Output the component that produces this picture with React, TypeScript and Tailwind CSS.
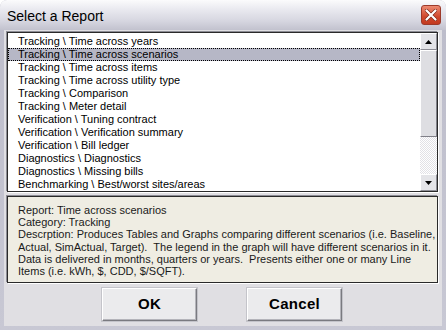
const reports = [
  "Tracking \\ Time across years",
  "Tracking \\ Time across scenarios",
  "Tracking \\ Time across items",
  "Tracking \\ Time across utility type",
  "Tracking \\ Comparison",
  "Tracking \\ Meter detail",
  "Verification \\ Tuning contract",
  "Verification \\ Verification summary",
  "Verification \\ Bill ledger",
  "Diagnostics \\ Diagnostics",
  "Diagnostics \\ Missing bills",
  "Benchmarking \\ Best/worst sites/areas",
];

const description = [
  "Report: Time across scenarios",
  "Category: Tracking",
  "Descrption: Produces Tables and Graphs comparing different scenarios (i.e. Baseline,",
  "Actual, SimActual, Target).  The legend in the graph will have different scenarios in it.",
  "Data is delivered in months, quarters or years.  Presents either one or many Line",
  "Items (i.e. kWh, $, CDD, $/SQFT).",
];

// petite flèche de la barre de défilement
function Arrow({ down }: { down?: boolean }) {
  return (
    <svg width="7" height="4" viewBox="0 0 7 4">
      <path d={down ? "M0 0h7L3.5 4z" : "M3.5 0L7 4H0z"} fill="#000" />
    </svg>
  );
}

function ScrollButton({ down }: { down?: boolean }) {
  return (
    <div className="flex h-[17px] items-center justify-center border border-t-white border-l-white border-r-[#8e8e96] border-b-[#8e8e96] bg-[#e4e4e8]">
      <Arrow down={down} />
    </div>
  );
}

export default function App() {
  const selected = 1;

  return (
    <div className="h-[330px] w-[446px] bg-white font-['Liberation_Sans',Arial,sans-serif]">
      <div className="flex h-full flex-col overflow-hidden rounded-t-[7px] bg-[linear-gradient(#bcbcca,#c8c8d4)]">
        {/* Barre de titre */}
        <div className="flex h-[30px] shrink-0 items-center justify-between bg-[linear-gradient(#fbfbfc_0%,#eaeaf0_30%,#d6d6e0_70%,#c2c2ce_100%)] pl-[7px] pr-[5px]">
          <span className="pt-[1px] text-[14px] leading-none text-black">Select a Report</span>
          <div className="flex h-[20px] w-[20px] items-center justify-center rounded-[3px] border border-[#9c3a2a] bg-[linear-gradient(#ec8a72,#d0482c_60%,#c23a20)]">
            <svg width="12" height="12" viewBox="0 0 12 12">
              <path d="M1.5 1.5l9 9M10.5 1.5l-9 9" stroke="#7a2616" strokeWidth="3.4" strokeLinecap="round" />
              <path d="M1.5 1.5l9 9M10.5 1.5l-9 9" stroke="#fff" strokeWidth="2.2" strokeLinecap="round" />
            </svg>
          </div>
        </div>

        {/* Zone client */}
        <div className="mx-[4px] mb-[4px] flex flex-1 flex-col bg-[#e0dfe3] pt-[2px] pl-[3px] pr-[4px]">
          {/* Liste */}
          <div className="flex h-[160px] border border-[#2a2a2a] bg-white shadow-[1px_1px_0_#ffffff,-1px_-1px_0_#8c8c94]">
            <div className="flex-1 pt-[2px] text-[11px] text-black">
              {reports.map((r, i) => (
                <div
                  key={r}
                  className={`h-[13px] whitespace-nowrap border pl-[9px] leading-[11px] ${
                    i === selected ? "border-dotted border-black bg-[#b6b7c6]" : "border-transparent"
                  }`}
                >
                  {r}
                </div>
              ))}
            </div>
            <div className="flex w-[17px] flex-col">
              <ScrollButton />
              <div className="h-[87px] border border-t-white border-l-white border-r-[#808088] border-b-[#808088] bg-[#dedee2]" />
              <div className="flex-1 bg-[repeating-conic-gradient(#e2e1e6_0_25%,#ffffff_0_50%)] bg-size-[2px_2px]" />
              <ScrollButton down />
            </div>
          </div>

          {/* Description */}
          <div className="mt-[4px] h-[87px] border border-[#2a2a2a] bg-[#efede3] pt-[7px] pl-[10px] text-[11px] leading-[12.2px] text-[#1a1a1a] shadow-[1px_1px_0_#ffffff,-1px_-1px_0_#8c8c94]">
            {description.map((line) => (
              <div key={line} className="whitespace-pre">
                {line}
              </div>
            ))}
          </div>

          {/* Boutons */}
          <div className="mt-[5px] flex justify-center gap-[50px] pr-[1px]">
            {["OK", "Cancel"].map((label) => (
              <button
                key={label}
                className="flex h-[33px] w-[95px] items-center justify-center border border-t-white border-l-white border-r-[#7a7a80] border-b-[#7a7a80] bg-[#ebebed] text-[15px] font-bold tracking-[0.3px] text-black shadow-[inset_-1px_-1px_0_#b4b4ba,0_0_0_1px_#c4c4ca]"
              >
                {label}
              </button>
            ))}
          </div>
        </div>
      </div>
    </div>
  );
}
